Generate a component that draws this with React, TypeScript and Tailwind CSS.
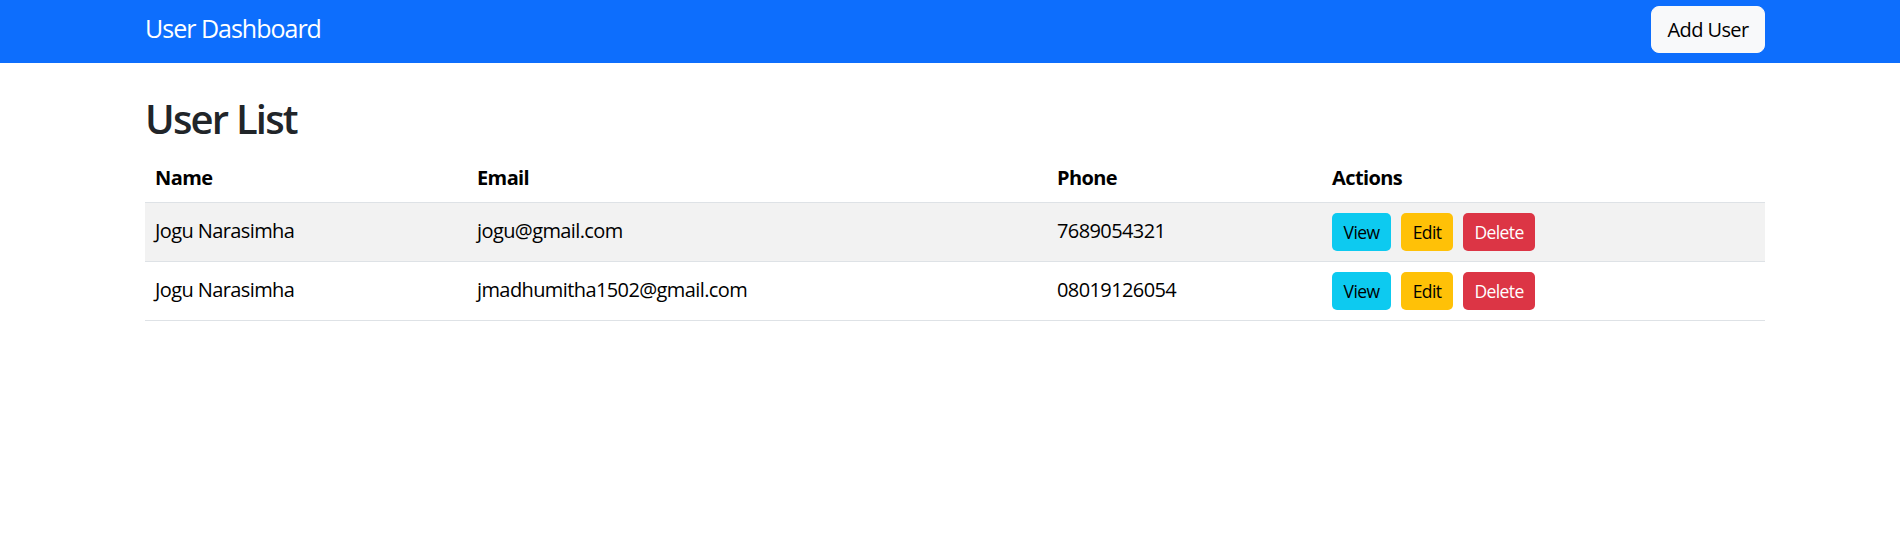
const users = [
  { name: 'Jogu Narasimha', email: 'jogu@gmail.com', phone: '7689054321' },
  { name: 'Jogu Narasimha', email: 'jmadhumitha1502@gmail.com', phone: '08019126054' },
]

export default function App() {
  return (
    <div className="min-h-[534px] bg-white font-['Open_Sans',sans-serif] text-[20px] leading-[1.5] tracking-[-0.03em] text-[#212529]">
      <nav className="h-[63px] bg-[#0d6efd]">
        <div className="ml-[145px] flex h-full w-[1620px] items-start justify-between">
          <span className="mt-[13px] text-[25px] leading-[1.2] tracking-[-0.04em] text-white">User Dashboard</span>
          <button className="mt-[6px] h-[47px] w-[114px] rounded-[8px] border border-[#f8f9fa] bg-[#f8f9fa] text-[20px] text-black">
            Add User
          </button>
        </div>
      </nav>

      <main className="ml-[145px] w-[1620px] pt-[32px]">
        <h2 className="mb-[9px] h-[48px] text-[40px] font-semibold leading-[1.2] tracking-[-0.045em]">User List</h2>
        <table className="w-full border-collapse text-left text-black">
          <thead>
            <tr className="border-b border-[#dee2e6]">
              <th className="w-[322px] px-[10px] pb-[9px] pt-[11px] font-bold">Name</th>
              <th className="w-[580px] px-[10px] pb-[9px] pt-[11px] font-bold">Email</th>
              <th className="w-[275px] px-[10px] pb-[9px] pt-[11px] font-bold">Phone</th>
              <th className="px-[10px] pb-[9px] pt-[11px] font-bold">Actions</th>
            </tr>
          </thead>
          <tbody>
            {users.map((u, i) => (
              <tr key={i} className={`border-b border-[#dee2e6] ${i % 2 === 0 ? 'bg-[#f2f2f2]' : 'bg-white'}`}>
                <td className="px-[10px] pt-[13px] align-top">{u.name}</td>
                <td className="px-[10px] pt-[13px] align-top">{u.email}</td>
                <td className="px-[10px] pt-[13px] align-top">{u.phone}</td>
                <td className="px-[10px] pb-[10px] pt-[10px] align-top">
                  <div className="flex gap-[10px] text-[17.5px] leading-[1.5]">
                    <button className="h-[38px] w-[59px] rounded-[5px] bg-[#0dcaf0] text-black">View</button>
                    <button className="h-[38px] w-[52px] rounded-[5px] bg-[#ffc107] text-black">Edit</button>
                    <button className="h-[38px] w-[72px] rounded-[5px] bg-[#dc3545] text-white">Delete</button>
                  </div>
                </td>
              </tr>
            ))}
          </tbody>
        </table>
      </main>
    </div>
  )
}
